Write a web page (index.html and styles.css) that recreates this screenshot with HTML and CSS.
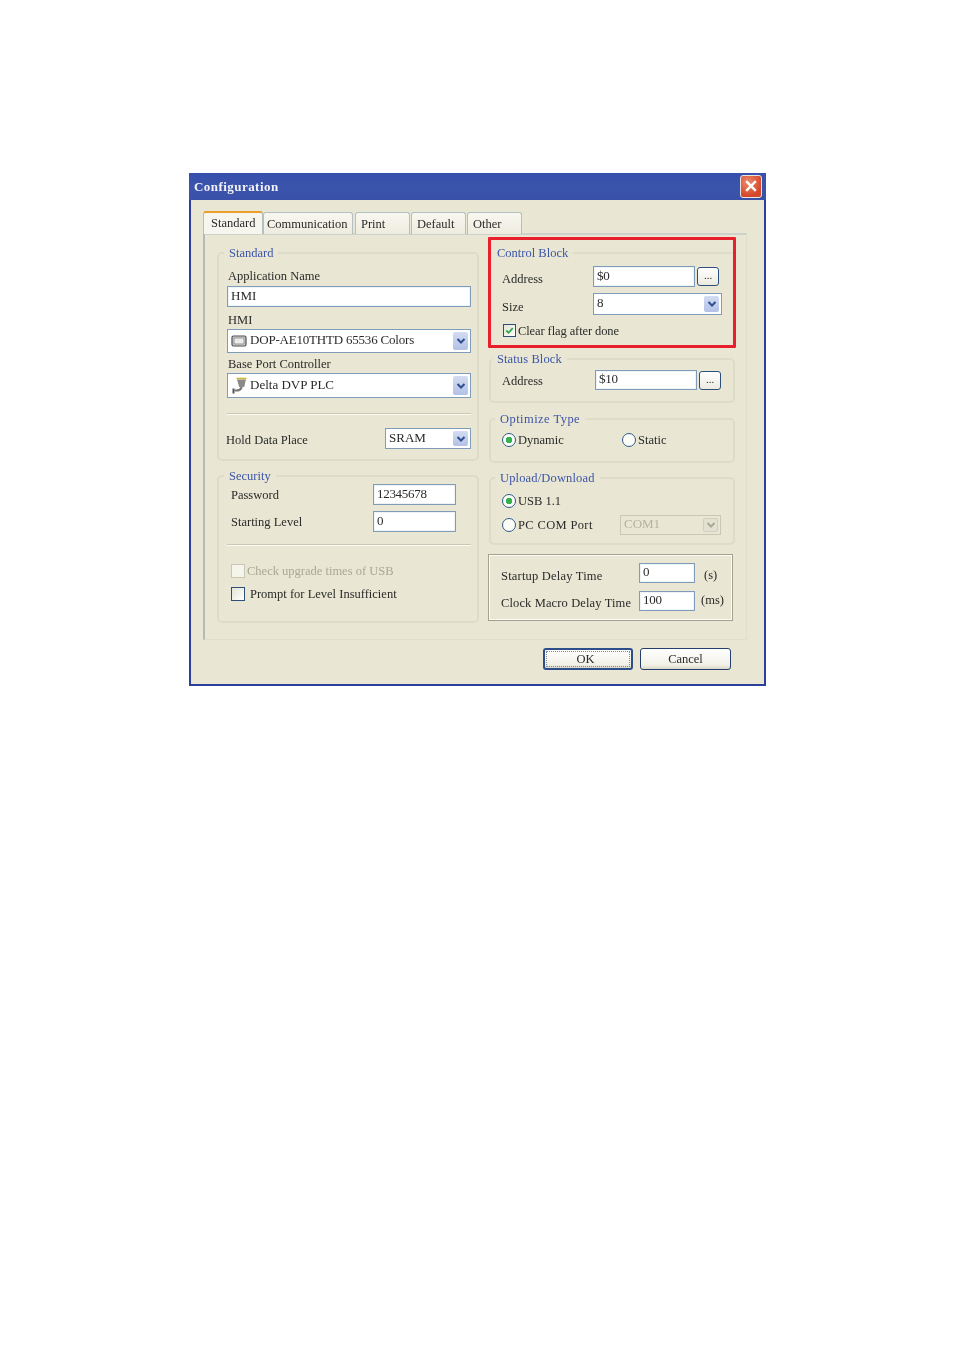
FILE: index.html
```html
<!DOCTYPE html>
<html lang="en">
<head>
<meta charset="utf-8">
<title>Configuration</title>
<link rel="stylesheet" href="styles.css">
</head>
<body>
<div class="dialog">
  <div class="titlebar">
    <span class="title">Configuration</span>
    <span class="close"><svg viewBox="0 0 20 20" width="16" height="16"><path d="M4 4L16 16M16 4L4 16" stroke="#fff" stroke-width="3" fill="none"/></svg></span>
  </div>
  <div class="tabs">
    <div class="tab tab-active w-standard">Standard</div>
    <div class="tab w-comm">Communication</div>
    <div class="tab w-print">Print</div>
    <div class="tab w-default">Default</div>
    <div class="tab w-other">Other</div>
  </div>
  <div class="panel">
    <div class="col-left">
      <fieldset class="group">
        <legend>Standard</legend>
        <div class="inner g-standard">
          <div class="lbl mt9 lbl-in">Application Name</div>
          <div class="field h21 mt3">HMI</div>
          <div class="lbl mt6 lbl-in">HMI</div>
          <div class="select h24 mt2">
            <svg class="ico" viewBox="0 0 16 14" width="16" height="14"><rect x="1" y="2" width="14" height="10" rx="1.5" fill="#d4d4d4" stroke="#4f4f4f" stroke-width="1.2"/><rect x="3" y="4" width="10" height="6" fill="#ececec" stroke="#777" stroke-width=".7"/></svg>
            <span class="grow select-text">DOP-AE10THTD 65536 Colors</span>
            <span class="arrow"><svg viewBox="0 0 10 8" width="10" height="8"><path d="M1.5 2L5 5.5L8.5 2" stroke="#2f4f8f" stroke-width="2" fill="none"/></svg></span>
          </div>
          <div class="lbl mt4 lbl-in">Base Port Controller</div>
          <div class="select h25 mt2">
            <svg class="ico" viewBox="0 0 16 18" width="16" height="18"><path d="M6 2.5H15L13.2 10H8.2Z" fill="#8a8a8a"/><path d="M5.5 1.5H15.5" stroke="#c9b93a" stroke-width="1.6"/><path d="M10.5 10Q10 13.5 5 13.5H3.5" stroke="#7a7a7a" stroke-width="2.2" fill="none"/><path d="M2.5 11.5V16.5" stroke="#555" stroke-width="2"/></svg>
            <span class="grow">Delta DVP PLC</span>
            <span class="arrow"><svg viewBox="0 0 10 8" width="10" height="8"><path d="M1.5 2L5 5.5L8.5 2" stroke="#2f4f8f" stroke-width="2" fill="none"/></svg></span>
          </div>
          <div class="divider mt15"></div>
          <div class="row mt13 between">
            <span class="lbl offset-hold">Hold Data Place</span>
            <div class="select h21 w-sram">
              <span class="grow">SRAM</span>
              <span class="arrow"><svg viewBox="0 0 10 8" width="10" height="8"><path d="M1.5 2L5 5.5L8.5 2" stroke="#2f4f8f" stroke-width="2" fill="none"/></svg></span>
            </div>
          </div>
        </div>
      </fieldset>
      <fieldset class="group mt8">
        <legend>Security</legend>
        <div class="inner g-security">
          <div class="row mt1 sec-row">
            <span class="lbl">Password</span>
            <div class="field h21 w-sec tight">12345678</div>
          </div>
          <div class="row mt6 sec-row">
            <span class="lbl">Starting Level</span>
            <div class="field h21 w-sec">0</div>
          </div>
          <div class="divider mt12"></div>
          <div class="row mt18 check-row">
            <span class="check check-off"></span>
            <span class="lbl muted">Check upgrade times of USB</span>
          </div>
          <div class="row mt9 check-row">
            <span class="check"></span>
            <span class="lbl prompt">Prompt for Level Insufficient</span>
          </div>
        </div>
      </fieldset>
    </div>
    <div class="col-right">
      <div class="redbox">
        <fieldset class="group group-plain">
          <legend>Control Block</legend>
          <div class="row mt6 ctl-row">
            <span class="lbl ctl-lbl">Address</span>
            <div class="field h21 w-addr tight">$0</div>
            <span class="dots">...</span>
          </div>
          <div class="row mt6 ctl-row">
            <span class="lbl ctl-lbl">Size</span>
            <div class="select h22 w-size">
              <span class="grow">8</span>
              <span class="arrow"><svg viewBox="0 0 10 8" width="10" height="8"><path d="M1.5 2L5 5.5L8.5 2" stroke="#2f4f8f" stroke-width="2" fill="none"/></svg></span>
            </div>
          </div>
          <div class="row mt9 clear-row">
            <span class="check check-small"><svg viewBox="0 0 12 12" width="11" height="11"><path d="M2.5 6L5 8.5L9.5 3.5" stroke="#2fa84a" stroke-width="2" fill="none"/></svg></span>
            <span class="lbl clear-text">Clear flag after done</span>
          </div>
        </fieldset>
      </div>
      <fieldset class="group group-r mt4">
        <legend class="legend-status">Status Block</legend>
        <div class="row mt4 status-row">
          <span class="lbl status-lbl">Address</span>
          <div class="field h20 w-addr tight">$10</div>
          <span class="dots">...</span>
        </div>
      </fieldset>
      <fieldset class="group group-r mt9">
        <legend class="legend-wide">Optimize Type</legend>
        <div class="row mt7 radio-row pb14">
          <span class="radio radio-on"></span><span class="lbl w-dyn">Dynamic</span>
          <span class="radio"></span><span class="lbl">Static</span>
        </div>
      </fieldset>
      <fieldset class="group group-r mt8">
        <legend class="legend-up">Upload/Download</legend>
        <div class="row mt9 radio-row">
          <span class="radio radio-on"></span><span class="lbl">USB 1.1</span>
        </div>
        <div class="row mt7 radio-row pb8">
          <span class="radio"></span><span class="lbl w-com">PC COM Port</span>
          <div class="select select-off h20 w-com1">
            <span class="grow">COM1</span>
            <span class="arrow arrow-off"><svg viewBox="0 0 10 8" width="10" height="8"><path d="M1.5 2L5 5.5L8.5 2" stroke="#a9a997" stroke-width="2" fill="none"/></svg></span>
          </div>
        </div>
      </fieldset>
      <div class="delay mt9">
        <div class="row delay-row">
          <span class="lbl w-delay lbl-down startup">Startup Delay Time</span>
          <div class="field h20 w-time">0</div>
          <span class="lbl unit-s">(s)</span>
        </div>
        <div class="row mt8 delay-row">
          <span class="lbl w-delay lbl-up clock">Clock Macro Delay Time</span>
          <div class="field h20 w-time tight">100</div>
          <span class="lbl unit-ms">(ms)</span>
        </div>
      </div>
    </div>
  </div>
  <div class="footer">
    <div class="btn btn-default"><span class="focus">OK</span></div>
    <div class="btn">Cancel</div>
  </div>
</div>
</body>
</html>
```
FILE: styles.css
```css
* { box-sizing: border-box; }
html, body { margin: 0; background: #fff; }
body { padding: 173px 0 0 189px; height: 1350px; overflow: hidden; font-family: "Liberation Serif", serif; font-size: 12.5px; color: #2a2a2a; }
.dialog { width: 577px; height: 513px; background: #e9e7d3; border: 2px solid #2c3f9c; border-top: 0; filter: blur(0.4px); }
.titlebar { height: 27px; margin: 0 -2px; background: linear-gradient(#3550ad, #3b54ab 55%, #3950a8); display: flex; align-items: center; justify-content: space-between; padding: 0 4px 0 5px; }
.title { color: #f2f2f6; font-weight: bold; font-size: 13px; letter-spacing: .45px; line-height: 26px; }
.close { width: 22px; height: 23px; margin-top: -1px; border: 1px solid #e8e4e0; border-radius: 3px; background: radial-gradient(circle at 35% 30%, #ee8a6c, #d5472a 70%); display: flex; align-items: center; justify-content: center; }

.tabs { display: flex; margin: 11px 0 0 12px; height: 23px; position: relative; z-index: 1; }
.tab { height: 22px; margin-top: 1px; padding: 2px 0 0 5px; margin-right: 1px; background: linear-gradient(#f8f7f0, #eeecdf); border: 1px solid #b3c0c2; border-bottom: 0; border-radius: 3px 3px 0 0; line-height: 18px; }
.tab-active { height: 23px; margin-top: 0; margin-right: 0; padding-top: 1px; padding-left: 7px; background: #f7f6ee; border: 0; border-top: 2px solid #eb9f2a; border-left: 1px solid #b3c0c2; border-right: 1px solid #b3c0c2; }
.w-standard { width: 60px; }
.w-comm { width: 90px; padding-left: 3px; margin-right: 2px; }
.w-print { width: 55px; }
.w-default { width: 55px; }
.w-other { width: 55px; }

.panel { display: flex; gap: 9px; margin-left: 12px; width: 544px; height: 407px; margin-top: -1px; padding: 0 10px 0 12px; border-top: 2px solid #cdd2cb; border-left: 2px solid #b5bbb4; border-bottom: 1px solid #e0dfcc; border-right: 1px solid #e0dfcc; }
.col-left { width: 262px; flex: none; padding-top: 11px; }
.col-right { width: 248px; flex: none; padding-top: 2px; }

.group { margin: 0; padding: 0; min-width: 0; border: 2px solid #dddcc8; border-radius: 5px; }
.group legend { margin-left: 5px; padding: 0 5px; color: #3c55a8; line-height: 14px; height: 14px; white-space: nowrap; }
.group-r { margin-left: 1px; margin-right: 1px; }
.group-r legend { margin-left: 4px; padding: 0 5px; }
.group-r .legend-status { margin-left: 1px; letter-spacing: .1px; }
.group-r .legend-wide { letter-spacing: .45px; }
.group-r .legend-up { letter-spacing: .15px; }
.group-plain { border-width: 2px 0 0; border-radius: 0; padding-bottom: 8px; }
.group-plain legend { margin-left: 1px; }
.redbox { border: 3px solid #e8202c; padding-top: 6px; border-radius: 1px; }

.inner { padding: 0 6px 0 8px; }
.g-standard { padding-bottom: 10px; }
.g-security { padding-bottom: 20px; }

.lbl { display: block; height: 14px; line-height: 14px; white-space: nowrap; }
.lbl-in { margin-left: 1px; }
.row { display: flex; align-items: center; }
.between { justify-content: space-between; }
.muted { color: #a8a898; }
.tight { letter-spacing: -.3px; }
.select-text { letter-spacing: -.2px; }
.clear-text { letter-spacing: -.1px; }
.startup { letter-spacing: .2px; }
.clock { letter-spacing: .12px; }

.field { background: #fff; border: 1px solid #7f9db9; box-shadow: inset 0 0 0 1px #eef3f8; padding: 0 0 2px 3px; font-size: 13px; display: flex; align-items: center; white-space: nowrap; }
.select { background: #fff; border: 1px solid #7f9db9; padding: 0 2px 0 3px; font-size: 13px; display: flex; align-items: center; gap: 3px; white-space: nowrap; }
.select-off { background: #e9e7d3; color: #b3b3a3; border-color: #c9c8b6; }
.grow { flex: 1; padding-bottom: 2px; }
.ico { flex: none; }
.arrow { flex: none; width: 15px; align-self: stretch; margin: 2px 0; background: linear-gradient(#d3dcf2, #b3c1e6); border-radius: 2px; display: flex; align-items: center; justify-content: center; }
.arrow-off { background: #e3e2d2; border: 1px solid #d0cfbd; }

.h20 { height: 20px; }
.h21 { height: 21px; }
.h22 { height: 22px; }
.h24 { height: 24px; }
.h25 { height: 25px; }
.mt1 { margin-top: 1px; }
.mt2 { margin-top: 2px; }
.mt3 { margin-top: 3px; }
.mt4 { margin-top: 4px; }
.mt6 { margin-top: 6px; }
.mt7 { margin-top: 7px; }
.mt8 { margin-top: 8px; }
.mt9 { margin-top: 9px; }
.mt12 { margin-top: 12px; }
.mt13 { margin-top: 13px; }
.mt15 { margin-top: 15px; }
.mt18 { margin-top: 18px; }
.pb8 { padding-bottom: 8px; }
.pb14 { padding-bottom: 14px; }

.divider { height: 2px; background: linear-gradient(#c9c8b4 50%, #fbfaf3 50%); }
.offset-hold { margin-left: -1px; margin-top: 3px; }
.w-sram { width: 86px; }

.sec-row { padding-left: 4px; justify-content: space-between; padding-right: 15px; }
.w-sec { width: 83px; }
.check-row { padding-left: 4px; height: 14px; }
.check { flex: none; width: 14px; height: 14px; border: 1px solid #2c4f7c; background: linear-gradient(135deg, #e4e3d6, #fff); }
.check-off { border-color: #c8c7b4; background: #f6f5ec; margin-right: 2px; }
.prompt { margin-left: 5px; }

.ctl-row { padding-left: 11px; }
.ctl-lbl { width: 91px; margin-top: 5px; }
.w-addr { width: 102px; }
.dots { flex: none; width: 22px; height: 19px; margin-left: 2px; border: 1px solid #2c4f7c; border-radius: 3px; background: linear-gradient(#fff, #ecebe0); text-align: center; line-height: 15px; font-size: 11px; }
.w-size { width: 129px; }
.clear-row { padding-left: 12px; height: 13px; }
.check-small { width: 13px; height: 13px; margin-right: 2px; display: flex; align-items: center; justify-content: center; }

.status-row { padding-left: 11px; padding-bottom: 11px; }
.status-lbl { width: 93px; margin-top: 2px; }

.radio-row { padding-left: 11px; }
.radio { flex: none; width: 14px; height: 14px; border-radius: 50%; border: 1px solid #2c5a8c; background: #fdfdf8; margin-right: 2px; position: relative; }
.radio-on { background: radial-gradient(circle, #35b24f 0 3px, #fdfdf8 3.5px); }
.w-dyn { width: 104px; }
.w-com { width: 102px; letter-spacing: .35px; }
.w-com1 { width: 101px; }

.delay { width: 245px; height: 67px; border: 1px solid #a2a291; box-shadow: inset 0 0 0 1px #fbfaf3; padding: 8px 0 0 12px; }
.delay-row { height: 20px; }
.w-delay { width: 138px; }
.lbl-down { margin-top: 5px; }
.lbl-up { margin-top: 4px; }
.w-time { width: 56px; }
.unit-s { margin-left: 9px; margin-top: 4px; }
.unit-ms { margin-left: 6px; margin-top: -3px; }

.footer { display: flex; justify-content: flex-end; gap: 7px; margin-top: 8px; padding-right: 33px; }
.btn { width: 90px; height: 22px; border: 1px solid #23406f; border-radius: 3px; background: linear-gradient(#fff, #f2f1e7 80%, #dcd8c8); display: flex; align-items: center; justify-content: center; }
.btn + .btn { width: 91px; }
.btn-default { border: 2px solid #2c4f8c; padding: 1px; }
.focus { flex: 1; height: 100%; border: 1px dotted #888; text-align: center; line-height: 14px; padding-right: 5px; }
```
